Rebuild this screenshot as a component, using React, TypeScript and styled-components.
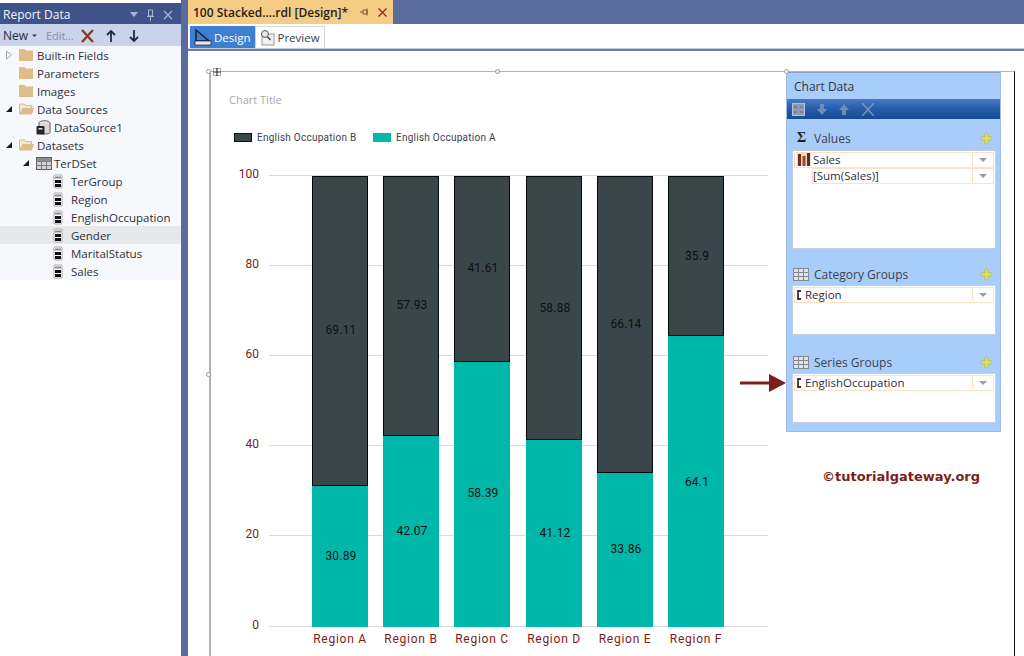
import { createGlobalStyle } from "styled-components";
import styled from "styled-components";

const GlobalStyle = createGlobalStyle`
  html, body {
    margin: 0;
    padding: 0;
    background: #5a6b9e;
  }
  * {
    box-sizing: border-box;
  }
`;

const uiFont = `"Open Sans", "Noto Sans", "Liberation Sans", sans-serif`;
const chartFont = `Roboto, "Liberation Sans", sans-serif`;

const Page = styled.div`
  width: 1024px;
  height: 656px;
  overflow: hidden;
  display: flex;
  background: #5a6b9e;
  font-family: ${uiFont};
  color: #2d2f3a;
`;

const Sidebar = styled.aside`
  width: 181px;
  height: 100%;
  padding-top: 3px;
  display: flex;
  flex-direction: column;
  background: #ffffff;
  flex-shrink: 0;
`;

const PanelHeader = styled.div`
  height: 21px;
  padding: 2px 8px 0 3px;
  display: flex;
  align-items: center;
  background: #40528a;
  color: #f2f4fa;
  font-size: 12px;
  gap: 8px;
`;

const PanelTitle = styled.span`
  flex: 1;
`;

const PanelToolbar = styled.div`
  height: 22px;
  padding: 1px 3px 0;
  display: flex;
  align-items: center;
  background: #c9d3ea;
  font-size: 12px;
`;

const ToolLabel = styled.span`
  color: #2a2c34;
  margin-right: 1px;
`;

const MutedLabel = styled.span`
  color: #8b8f9b;
  font-size: 11px;
  letter-spacing: -0.1px;
  margin-right: 4px;
`;

const ToolIcon = styled.span`
  width: 20px;
  height: 18px;
  display: flex;
  align-items: center;
  justify-content: center;
  margin-right: 3px;
`;

const Tree = styled.div`
  background: #f6f8fc;
  flex-shrink: 0;
`;

const TreeRow = styled.div<{ $level: number; $selected?: boolean }>`
  height: 18px;
  display: flex;
  align-items: center;
  padding-left: ${(p) => 5 + p.$level * 17}px;
  background: ${(p) => (p.$selected ? "#e6e8ea" : "transparent")};
  font-size: 11.5px;
  white-space: nowrap;
`;

const Expander = styled.span`
  width: 14px;
  height: 10px;
  display: flex;
  align-items: center;
  flex-shrink: 0;
`;

const RowIcon = styled.span`
  width: 18px;
  height: 16px;
  display: flex;
  align-items: center;
  flex-shrink: 0;
`;

const Splitter = styled.div`
  width: 7px;
  flex-shrink: 0;
  background: #5a6b9e;
`;

const Main = styled.main`
  flex: 1;
  min-width: 0;
  display: flex;
  flex-direction: column;
`;

const DocTabs = styled.div`
  height: 24px;
  display: flex;
  flex-shrink: 0;
`;

const DocTab = styled.div`
  width: 205px;
  padding-left: 5px;
  padding-right: 6px;
  display: flex;
  align-items: center;
  background: #f5cc84;
  color: #1e1e1e;
  font-size: 12px;
  font-weight: 600;
  white-space: nowrap;
`;

const DocTabTitle = styled.span`
  flex: 1;
`;

const ModeBar = styled.div`
  height: 24px;
  padding: 2px 0 0 2px;
  display: flex;
  background: #ffffff;
  flex-shrink: 0;
`;

const ModeTab = styled.div<{ $active?: boolean }>`
  height: 22px;
  padding: 0 4px 0 3px;
  display: flex;
  align-items: center;
  gap: 2px;
  background: ${(p) => (p.$active ? "#3f7fd0" : "#ffffff")};
  color: ${(p) => (p.$active ? "#ffffff" : "#3a3c48")};
  border: 1px solid ${(p) => (p.$active ? "#3f7fd0" : "#d4d7de")};
  border-bottom: none;
  font-size: 11.5px;
`;

const ModeRule = styled.div`
  height: 3px;
  flex-shrink: 0;
  background: linear-gradient(#c9cfdc 0 1px, #6d7ca8 1px);
`;

const Canvas = styled.div`
  flex: 1;
  padding: 20px 0 0 21px;
  background: #ffffff;
  overflow: hidden;
`;

const ReportBody = styled.div`
  position: relative;
  width: 806px;
  height: 600px;
  display: flex;
  border-top: 1px solid #b4b4b4;
  border-left: 2px solid #b4b4b4;
  border-right: 1px solid #111111;
`;

const Handle = styled.span<{ $x: number; $y: number }>`
  position: absolute;
  left: ${(p) => p.$x}px;
  top: ${(p) => p.$y}px;
  width: 5px;
  height: 5px;
  border-radius: 50%;
  border: 1px solid #9a9a9a;
  background: #ffffff;
`;

const MoveHandle = styled.span`
  position: absolute;
  left: 2px;
  top: -4px;
  width: 8px;
  height: 8px;
  display: flex;
`;

const ChartArea = styled.svg`
  width: 575px;
  height: 584px;
  display: block;
  flex-shrink: 0;
`;

const SideColumn = styled.div`
  width: 215px;
  display: flex;
  flex-direction: column;
  flex-shrink: 0;
`;

const ChartData = styled.section`
  height: 360px;
  display: flex;
  flex-direction: column;
  background: #a9cdfb;
  border: 1px solid #9fbde6;
  border-top-color: #8ea2c0;
`;

const ChartDataTitle = styled.div`
  height: 26px;
  padding: 1px 0 0 7px;
  display: flex;
  align-items: center;
  font-size: 12px;
  color: #2f3540;
`;

const ChartDataTools = styled.div`
  height: 20px;
  padding-left: 5px;
  display: flex;
  align-items: center;
  gap: 12px;
  background: linear-gradient(#4a7cc2, #2a5dab 45%, #164a94);
`;

const Section = styled.div<{ $height: number }>`
  height: ${(p) => p.$height}px;
  padding: 0 4px 0 5px;
  display: flex;
  flex-direction: column;
  justify-content: flex-end;
  flex-shrink: 0;
`;

const SectionHead = styled.div<{ $pad: number }>`
  height: 22px;
  padding: 0 3px ${(p) => p.$pad}px 1px;
  display: flex;
  align-items: center;
  gap: 5px;
  font-size: 12px;
  color: #3c4350;
`;

const Sigma = styled.span`
  width: 16px;
  padding-left: 4px;
  font-family: "Liberation Serif", serif;
  font-weight: 700;
  font-size: 14px;
  color: #1e1e1e;
`;

const SectionTitle = styled.span`
  flex: 1;
`;

const FieldBox = styled.div<{ $height: number }>`
  height: ${(p) => p.$height}px;
  padding: 1px 1px;
  background: #ffffff;
  border: 1px solid #c3cee0;
`;

const FieldRow = styled.div<{ $indent?: boolean }>`
  height: 16px;
  padding-bottom: 1px;
  margin-left: ${(p) => (p.$indent ? "18px" : "0")};
  display: flex;
  align-items: center;
  border: 1px solid #fde0c6;
  font-size: 11.5px;
  color: #2d2f3a;
`;

const FieldIcon = styled.span<{ $narrow?: boolean }>`
  width: ${(p) => (p.$narrow ? "10px" : "18px")};
  height: 14px;
  padding-left: ${(p) => (p.$narrow ? "1px" : "2px")};
  display: flex;
  align-items: center;
  flex-shrink: 0;
`;

const FieldName = styled.span`
  flex: 1;
  white-space: nowrap;
`;

const FieldCaret = styled.span`
  width: 21px;
  height: 100%;
  display: flex;
  align-items: center;
  justify-content: center;
  border-left: 1px solid #fde0c6;
  &::before {
    content: "";
    border-left: 4px solid transparent;
    border-right: 4px solid transparent;
    border-top: 4px solid #9a9ca4;
  }
`;

const Watermark = styled.div`
  margin-top: 37px;
  padding-left: 36px;
  font-family: "DejaVu Sans", sans-serif;
  font-size: 13px;
  font-weight: 700;
  color: #7a1f1c;
  white-space: nowrap;
`;

const Pointer = styled.svg`
  position: absolute;
  left: 529px;
  top: 299px;
  width: 48px;
  height: 24px;
`;

const Folder = ({ open }: { open?: boolean }) => (
  <svg width="15" height="14" viewBox="0 0 15 14">
    {open ? (
      <>
        <path d="M0.5 2h5l1 1.5h6V12h-12z" fill="#efe6d6" stroke="#d9bd8e" />
        <path d="M0.5 12l3-6H15l-2 6z" fill="#dfbd8a" />
      </>
    ) : (
      <path d="M0 1h5.5l1 1.5H14V13H0z" fill="#dfbd8a" />
    )}
  </svg>
);

const Caret = ({ open }: { open?: boolean }) =>
  open ? (
    <svg width="8" height="8" viewBox="0 0 8 8">
      <path d="M1 7h6V1z" fill="#1c1c1c" />
    </svg>
  ) : (
    <svg width="8" height="10" viewBox="0 0 8 10">
      <path d="M1.5 1l5 4-5 4z" fill="#fff" stroke="#a6a6a6" />
    </svg>
  );

const DbIcon = () => (
  <svg width="15" height="15" viewBox="0 0 15 15">
    <ellipse cx="8.5" cy="3" rx="5.5" ry="2.3" fill="#e2e2e2" stroke="#5f5f5f" />
    <path d="M3 3v9.5c0 2 11 2 11 0V3" fill="#d8d8d8" stroke="#5f5f5f" />
    <rect x="0.5" y="6" width="8" height="8.5" rx="1" fill="#262626" />
    <rect x="2.5" y="8" width="4" height="1.5" fill="#ddd" />
  </svg>
);

const GridIcon = () => (
  <svg width="16" height="13" viewBox="0 0 16 13">
    <rect x="0.5" y="0.5" width="15" height="12" fill="#d4d4d4" stroke="#5b5b5b" />
    <path d="M0 4.5h16M0 8.5h16M5.5 1v12M10.5 1v12" stroke="#7a7a7a" />
    <rect x="1" y="1" width="14" height="3" fill="#8f8f8f" />
  </svg>
);

const FieldGlyph = () => (
  <svg width="10" height="15" viewBox="0 0 10 15">
    <rect x="1" y="1" width="8" height="13" rx="1" fill="#fff" stroke="#a8a8a8" />
    <rect x="2" y="6" width="6" height="3" fill="#111" />
    <rect x="2" y="10" width="6" height="3" fill="#111" />
    <rect x="2" y="2.5" width="6" height="2" fill="#8a8a8a" />
  </svg>
);

const Plus = () => (
  <svg width="13" height="13" viewBox="0 0 13 13">
    <path d="M5 1h3v4h4v3H8v4H5V8H1V5h4z" fill="#e6e04a" stroke="#c4b93a" strokeWidth="0.7" />
  </svg>
);

const Bracket = () => (
  <svg width="6" height="10" viewBox="0 0 6 10">
    <path d="M5 1H2v8h3" fill="none" stroke="#333" strokeWidth="1.8" />
  </svg>
);

const SectionGrid = () => (
  <svg width="16" height="13" viewBox="0 0 16 13">
    <rect x="0.5" y="0.5" width="15" height="12" fill="#dfe4ea" stroke="#808890" />
    <path d="M0 4.5h16M0 8.5h16M5.5 1v12M10.5 1v12" stroke="#808890" />
  </svg>
);

const fields = ["TerGroup", "Region", "EnglishOccupation", "Gender", "MaritalStatus", "Sales"];

interface BarData {
  name: string;
  x: number;
  split: number;
  top: string;
  topY: number;
  bottom: string;
  bottomY: number;
}

const bars: BarData[] = [
  { name: "Region A", x: 312, split: 486, top: "69.11", topY: 329, bottom: "30.89", bottomY: 555 },
  { name: "Region B", x: 383, split: 436, top: "57.93", topY: 304, bottom: "42.07", bottomY: 530 },
  { name: "Region C", x: 454, split: 362, top: "41.61", topY: 267, bottom: "58.39", bottomY: 492 },
  { name: "Region D", x: 526, split: 440, top: "58.88", topY: 307, bottom: "41.12", bottomY: 532 },
  { name: "Region E", x: 597, split: 473, top: "66.14", topY: 323, bottom: "33.86", bottomY: 548 },
  { name: "Region F", x: 668, split: 336, top: "35.9", topY: 255, bottom: "64.1", bottomY: 481 },
];

const ticks = [
  { label: "100", y: 175.5 },
  { label: "80", y: 265.5 },
  { label: "60", y: 355.5 },
  { label: "40", y: 445.5 },
  { label: "20", y: 535.5 },
  { label: "0", y: 626.5 },
];

function Chart() {
  return (
    <ChartArea viewBox="211 72 575 584" fontFamily={chartFont}>
      <text x="229" y="104" fontSize="11" fill="#a9a9a9" fontFamily={uiFont}>
        Chart Title
      </text>
      <rect x="234.5" y="133.5" width="17" height="8" fill="#3a474a" stroke="#111" strokeWidth="1" />
      <text x="257" y="141" fontSize="10" letterSpacing="0.25" fill="#3a3f48">
        English Occupation B
      </text>
      <rect x="373" y="133" width="18" height="9" fill="#00b8a9" />
      <text x="396" y="141" fontSize="10" letterSpacing="0.25" fill="#3a3f48">
        English Occupation A
      </text>
      {ticks.map((t) => (
        <g key={t.label}>
          <line x1="269" x2="768" y1={t.y} y2={t.y} stroke="#d9dbe0" />
          <text x="259" y={t.y + 2} textAnchor="end" fontSize="12" fill="#7c1d1a">
            {t.label}
          </text>
        </g>
      ))}
      {bars.map((b) => (
        <g key={b.name}>
          <rect x={b.x + 0.5} y="176.5" width="55" height={b.split - 177} fill="#3a474a" stroke="#050808" strokeWidth="1" />
          <rect x={b.x} y={b.split} width="56" height={627 - b.split} fill="#00b8a9" />
          <text x={b.x + 29} y={b.topY + 5} textAnchor="middle" fontSize="12" letterSpacing="0.2" fill="#0c0f10">
            {b.top}
          </text>
          <text x={b.x + 29} y={b.bottomY + 5} textAnchor="middle" fontSize="12" letterSpacing="0.2" fill="#0c0f10">
            {b.bottom}
          </text>
          <text x={b.x + 28} y="643" textAnchor="middle" fontSize="12" letterSpacing="0.75" fill="#7c1d1a">
            {b.name}
          </text>
        </g>
      ))}
    </ChartArea>
  );
}

export default function App() {
  return (
    <Page>
      <GlobalStyle />
      <Sidebar>
        <PanelHeader>
          <PanelTitle>Report Data</PanelTitle>
          <svg width="8" height="5" viewBox="0 0 8 5">
            <path d="M0 0h8L4 5z" fill="#a9b5d2" />
          </svg>
          <svg width="9" height="12" viewBox="0 0 9 12">
            <path d="M2.5 1h4v6h-4zM1 7.5h7M4.5 8v4" fill="none" stroke="#a9b5d2" />
          </svg>
          <svg width="10" height="10" viewBox="0 0 10 10">
            <path d="M1 1l8 8M9 1l-8 8" stroke="#a9b5d2" strokeWidth="1.2" />
          </svg>
        </PanelHeader>
        <PanelToolbar>
          <ToolLabel>New</ToolLabel>
          <svg width="12" height="6" viewBox="0 0 12 6" style={{ marginRight: 5 }}>
            <path d="M3 1.5h5L5.5 4z" fill="#3c3c3c" />
          </svg>
          <MutedLabel>Edit...</MutedLabel>
          <ToolIcon>
            <svg width="15" height="14" viewBox="0 0 15 14">
              <path d="M2 1l11 12M13 1L2 13" stroke="#8c3a20" strokeWidth="2.4" />
            </svg>
          </ToolIcon>
          <ToolIcon>
            <svg width="10" height="12" viewBox="0 0 10 12">
              <path d="M5 12V2M1 5l4-4 4 4" fill="none" stroke="#222c3c" strokeWidth="1.8" />
            </svg>
          </ToolIcon>
          <ToolIcon>
            <svg width="10" height="12" viewBox="0 0 10 12">
              <path d="M5 0v10M1 7l4 4 4-4" fill="none" stroke="#222c3c" strokeWidth="1.8" />
            </svg>
          </ToolIcon>
        </PanelToolbar>
        <Tree>
          <TreeRow $level={0}>
            <Expander>
              <Caret />
            </Expander>
            <RowIcon>
              <Folder />
            </RowIcon>
            Built-in Fields
          </TreeRow>
          <TreeRow $level={0}>
            <Expander />
            <RowIcon>
              <Folder />
            </RowIcon>
            Parameters
          </TreeRow>
          <TreeRow $level={0}>
            <Expander />
            <RowIcon>
              <Folder />
            </RowIcon>
            Images
          </TreeRow>
          <TreeRow $level={0}>
            <Expander>
              <Caret open />
            </Expander>
            <RowIcon>
              <Folder open />
            </RowIcon>
            Data Sources
          </TreeRow>
          <TreeRow $level={1}>
            <Expander />
            <RowIcon>
              <DbIcon />
            </RowIcon>
            DataSource1
          </TreeRow>
          <TreeRow $level={0}>
            <Expander>
              <Caret open />
            </Expander>
            <RowIcon>
              <Folder open />
            </RowIcon>
            Datasets
          </TreeRow>
          <TreeRow $level={1}>
            <Expander>
              <Caret open />
            </Expander>
            <RowIcon>
              <GridIcon />
            </RowIcon>
            TerDSet
          </TreeRow>
          {fields.map((f) => (
            <TreeRow key={f} $level={2} $selected={f === "Gender"}>
              <Expander />
              <RowIcon>
                <FieldGlyph />
              </RowIcon>
              {f}
            </TreeRow>
          ))}
        </Tree>
      </Sidebar>
      <Splitter />
      <Main>
        <DocTabs>
          <DocTab>
            <DocTabTitle>100 Stacked....rdl [Design]*</DocTabTitle>
            <svg width="10" height="10" viewBox="0 0 10 10" style={{ marginRight: 8 }}>
              <path d="M3 3h4v4H3zM0 5h3M7 1.5v7" fill="none" stroke="#7a5a2a" />
            </svg>
            <svg width="9" height="9" viewBox="0 0 9 9">
              <path d="M0.5 0.5l8 8M8.5 0.5l-8 8" stroke="#8a2a1c" strokeWidth="1.2" />
            </svg>
          </DocTab>
        </DocTabs>
        <ModeBar>
          <ModeTab $active>
            <svg width="18" height="17" viewBox="0 0 18 17">
              <path d="M2 1l13 11H2z" fill="none" stroke="#11233f" strokeWidth="1.6" />
              <rect x="1" y="12" width="16" height="4" fill="#e8e8e8" stroke="#222" strokeWidth="0.7" />
            </svg>
            Design
          </ModeTab>
          <ModeTab>
            <svg width="16" height="17" viewBox="0 0 16 17">
              <rect x="3" y="5" width="12" height="11" fill="#f2f2f2" stroke="#999" />
              <circle cx="6" cy="5" r="3.5" fill="#dfe9ef" stroke="#555" />
              <path d="M8.5 8l3 3" stroke="#444" strokeWidth="1.5" />
            </svg>
            Preview
          </ModeTab>
        </ModeBar>
        <ModeRule />
        <Canvas>
          <ReportBody>
            <Handle $x={-5} $y={-3} />
            <Handle $x={284} $y={-3} />
            <Handle $x={-5} $y={300} />
            <Handle $x={573} $y={-3} />
            <MoveHandle>
              <svg width="8" height="8" viewBox="0 0 8 8">
                <rect x="0.5" y="0.5" width="7" height="7" fill="#fff" stroke="#aaa" />
                <path d="M4 0v8M0 4h8" stroke="#333" strokeWidth="1.2" />
              </svg>
            </MoveHandle>
            <Chart />
            <SideColumn>
              <ChartData>
                <ChartDataTitle>Chart Data</ChartDataTitle>
                <ChartDataTools>
                  <svg width="13" height="13" viewBox="0 0 13 13">
                    <rect x="0.5" y="0.5" width="12" height="12" fill="#8d9db3" stroke="#b6c2d2" />
                    <path d="M2 4h3M8 4h3M2 9h3M8 9h3" stroke="#55657d" />
                  </svg>
                  <svg width="10" height="11" viewBox="0 0 10 11">
                    <path d="M3 0h4v5h3l-5 6-5-6h3z" fill="#6f8db5" />
                  </svg>
                  <svg width="10" height="11" viewBox="0 0 10 11">
                    <path d="M3 11h4V6h3L5 0 0 6h3z" fill="#6f8db5" />
                  </svg>
                  <svg width="14" height="13" viewBox="0 0 14 13">
                    <path d="M1 0l12 13M13 0L1 13" stroke="#7c93b3" strokeWidth="1.6" />
                  </svg>
                </ChartDataTools>
                <Section $height={130}>
                  <SectionHead $pad={2}>
                    <Sigma>Σ</Sigma>
                    <SectionTitle>Values</SectionTitle>
                    <Plus />
                  </SectionHead>
                  <FieldBox $height={99}>
                    <FieldRow>
                      <FieldIcon>
                        <svg width="14" height="13" viewBox="0 0 14 13">
                          <rect x="0" y="0" width="14" height="13" fill="#f5d9a8" />
                          <rect x="1" y="1" width="3" height="12" fill="#7c2a1e" />
                          <rect x="5.5" y="3" width="3" height="10" fill="#a8452a" />
                          <rect x="10" y="0" width="3" height="13" fill="#2a3a70" />
                        </svg>
                      </FieldIcon>
                      <FieldName>Sales</FieldName>
                      <FieldCaret />
                    </FieldRow>
                    <FieldRow $indent>
                      <FieldName>[Sum(Sales)]</FieldName>
                      <FieldCaret />
                    </FieldRow>
                  </FieldBox>
                </Section>
                <Section $height={86}>
                  <SectionHead $pad={0}>
                    <SectionGrid />
                    <SectionTitle>Category Groups</SectionTitle>
                    <Plus />
                  </SectionHead>
                  <FieldBox $height={50}>
                    <FieldRow>
                      <FieldIcon $narrow>
                        <Bracket />
                      </FieldIcon>
                      <FieldName>Region</FieldName>
                      <FieldCaret />
                    </FieldRow>
                  </FieldBox>
                </Section>
                <Section $height={88}>
                  <SectionHead $pad={0}>
                    <SectionGrid />
                    <SectionTitle>Series Groups</SectionTitle>
                    <Plus />
                  </SectionHead>
                  <FieldBox $height={50}>
                    <FieldRow>
                      <FieldIcon $narrow>
                        <Bracket />
                      </FieldIcon>
                      <FieldName>EnglishOccupation</FieldName>
                      <FieldCaret />
                    </FieldRow>
                  </FieldBox>
                </Section>
              </ChartData>
              <Watermark>©tutorialgateway.org</Watermark>
            </SideColumn>
            <Pointer viewBox="0 0 48 24">
              <path d="M0 12h30" stroke="#7a1f1c" strokeWidth="3" />
              <path d="M29 3l17 9-17 9z" fill="#7a1f1c" />
            </Pointer>
          </ReportBody>
        </Canvas>
      </Main>
    </Page>
  );
}
